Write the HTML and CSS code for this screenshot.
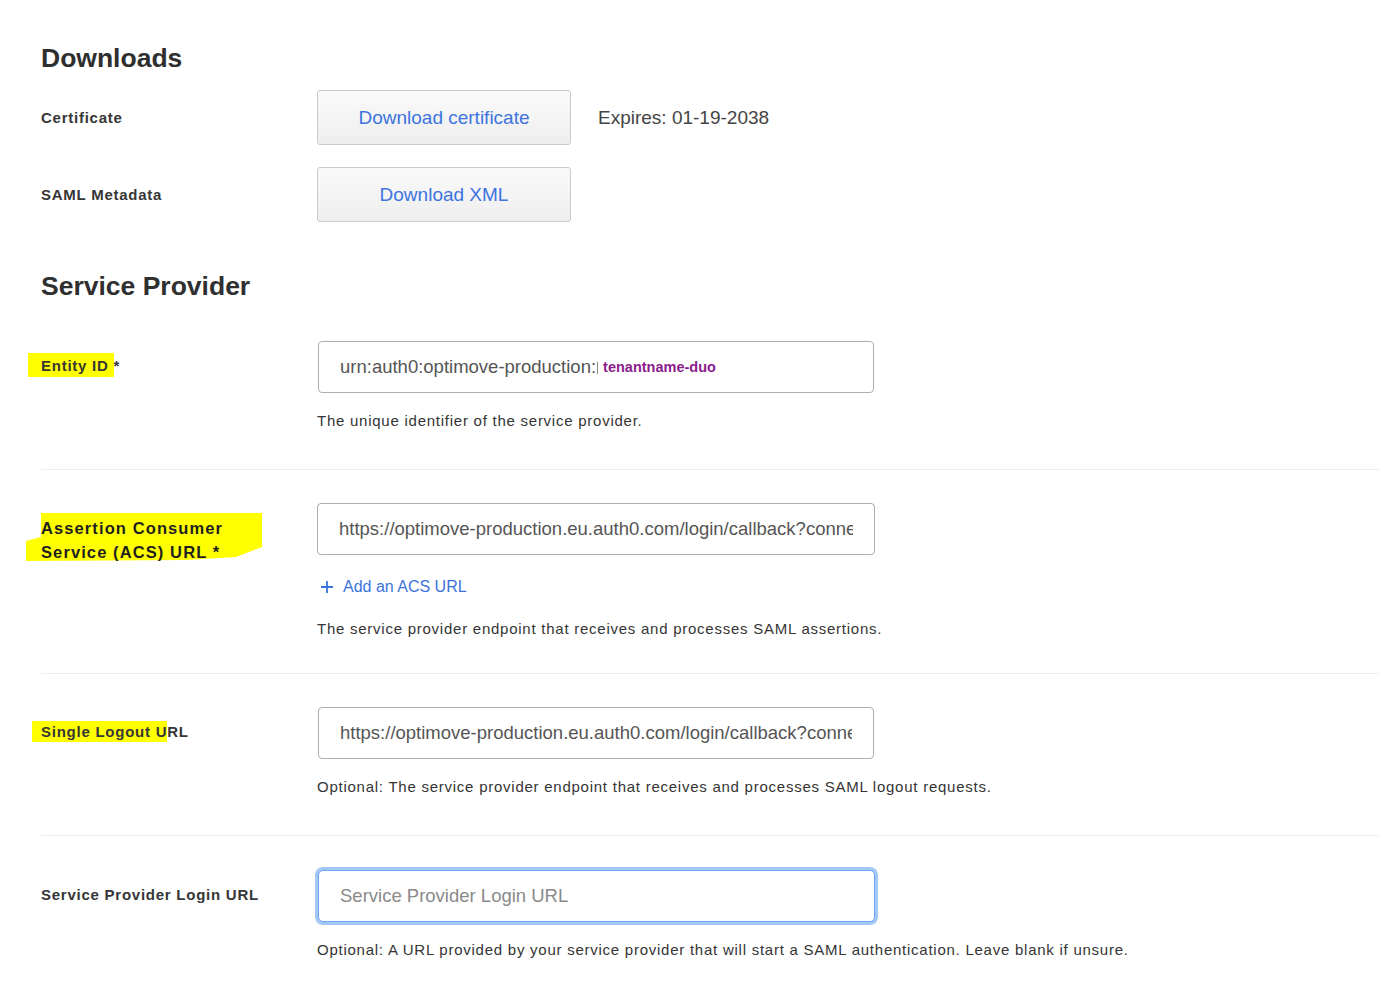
FILE: index.html
```html
<!DOCTYPE html>
<html>
<head>
<meta charset="utf-8">
<title>SAML Settings</title>
<link rel="stylesheet" href="styles.css">
</head>
<body>
<div class="page">
  <h2 class="section-title">Downloads</h2>
  <div class="dl-rows">
    <div class="dl-row">
      <div class="label">Certificate</div>
      <div class="dl-control">
        <button class="btn">Download certificate</button>
        <span class="expires">Expires: 01-19-2038</span>
      </div>
    </div>
    <div class="dl-row">
      <div class="label">SAML Metadata</div>
      <div class="dl-control">
        <button class="btn">Download XML</button>
      </div>
    </div>
  </div>

  <h2 class="section-title sp-title">Service Provider</h2>

  <div class="field field-first">
    <div class="label"><span class="hl hl-entity">Entity ID </span>*</div>
    <div class="control">
      <div class="input-box"><span class="urn">urn:auth0:optimove-production:</span><span class="cut"></span><span class="tenant">tenantname-duo</span></div>
      <p class="help">The unique identifier of the service provider.</p>
    </div>
  </div>

  <div class="field field-acs">
    <div class="label"><span class="hl-block">Assertion Consumer Service (ACS) URL *</span></div>
    <div class="control">
      <input class="text-input" type="text" value="https://optimove-production.eu.auth0.com/login/callback?connection=tenantname-duo">
      <a class="add-link" href="#"><svg class="plus" width="14" height="14" viewBox="0 0 14 14"><path d="M7 1v12M1 7h12" stroke="#3b73dc" stroke-width="1.8" fill="none"/></svg><span>Add an ACS URL</span></a>
      <p class="help help-acs">The service provider endpoint that receives and processes SAML assertions.</p>
    </div>
  </div>

  <div class="field">
    <div class="label"><span class="hl hl-logout">Single Logout U</span>RL</div>
    <div class="control">
      <input class="text-input" type="text" value="https://optimove-production.eu.auth0.com/login/callback?connection=tenantname-duo">
      <p class="help">Optional: The service provider endpoint that receives and processes SAML logout requests.</p>
    </div>
  </div>

  <div class="field field-last">
    <div class="label">Service Provider Login URL</div>
    <div class="control">
      <input class="text-input focused" type="text" placeholder="Service Provider Login URL">
      <p class="help">Optional: A URL provided by your service provider that will start a SAML authentication. Leave blank if unsure.</p>
    </div>
  </div>
</div>
</body>
</html>
```

FILE: styles.css
```css
* { box-sizing: border-box; }

html, body {
  margin: 0;
  padding: 0;
  background: #ffffff;
}

body {
  font-family: "Liberation Sans", Arial, sans-serif;
  color: #333333;
}

.page {
  padding: 42px 0 16px 41px;
}

.section-title {
  margin: 0 0 16px 0;
  font-size: 26.5px;
  line-height: 32px;
  font-weight: bold;
  color: #2f2f2f;
}

.sp-title {
  margin-top: 48px;
  margin-bottom: 39px;
}

.dl-rows {
  display: flex;
  flex-direction: column;
  gap: 22px;
}

.dl-row {
  display: grid;
  grid-template-columns: 276px 1fr;
  align-items: center;
  height: 55px;
}

.label {
  font-size: 15px;
  font-weight: bold;
  letter-spacing: 0.75px;
  color: #363636;
  line-height: 24px;
  padding-right: 49px;
}

.dl-control {
  display: flex;
  align-items: center;
}

.btn {
  width: 254px;
  height: 55px;
  border: 1px solid #cacaca;
  border-radius: 3px;
  background: linear-gradient(#fafafa, #eeeeee);
  font-family: "Liberation Sans", Arial, sans-serif;
  font-size: 19px;
  color: #3d74df;
  padding: 0;
  cursor: pointer;
}

.expires {
  margin-left: 27px;
  font-size: 19px;
  color: #444444;
}

.field {
  display: grid;
  grid-template-columns: 277px 1fr;
  padding: 33px 0 38px 0;
  border-bottom: 1px solid #eeeeee;
}

.field-first {
  padding-top: 0;
}

.field-acs {
  padding-bottom: 34px;
}

.field-last {
  border-bottom: none;
  padding-top: 34px;
}

.field .label {
  padding-top: 13px;
}

.control {
  display: flex;
  flex-direction: column;
  align-items: flex-start;
}

.input-box,
.text-input {
  width: 556px;
  height: 52px;
  border: 1px solid #adadad;
  border-radius: 4px;
  background: #ffffff;
  padding: 0 21px;
  font-family: "Liberation Sans", Arial, sans-serif;
  font-size: 18.5px;
  color: #555555;
  outline: none;
}

.field-acs .text-input {
  margin-left: -1px;
  width: 558px;
}

.input-box {
  display: flex;
  align-items: center;
  white-space: nowrap;
  overflow: hidden;
}

.urn {
  color: #555555;
}

.cut {
  display: inline-block;
  width: 2px;
  height: 12px;
  border-left: 1px solid #888888;
  margin: 2px 4px 0 1px;
}

.tenant {
  font-size: 14.5px;
  font-weight: bold;
  color: #8b1c8c;
}

.text-input::placeholder {
  color: #8a8a8a;
}

.text-input.focused {
  border: 1px solid #6fa6ee;
  box-shadow: 0 0 0 3px #a3c8f6;
  border-radius: 5px;
  width: 557px;
}

.help {
  margin: 18px 0 0 0;
  font-size: 15px;
  line-height: 20px;
  letter-spacing: 0.75px;
  color: #353535;
  margin-left: -1px;
}

.help-acs {
  margin-top: 22px;
}

.add-link {
  display: flex;
  align-items: center;
  gap: 9px;
  margin-top: 22px;
  margin-left: 2px;
  font-size: 16px;
  line-height: 20px;
  color: #3b73dc;
  text-decoration: none;
}

.plus {
  display: block;
}

.hl {
  background: #ffff00;
  padding: 4px 0 3px 13px;
  margin-left: -13px;
}

.hl-logout {
  padding: 2px 0 2px 9px;
  margin-left: -9px;
}

.hl-block {
  position: relative;
  display: inline-block;
  max-width: 215px;
  font-size: 16.5px;
  letter-spacing: 1.1px;
  color: #1f1f1f;
  z-index: 0;
}

.hl-block::before {
  content: "";
  position: absolute;
  left: -15px;
  top: -3px;
  width: 236px;
  height: 50px;
  background: #ffff00;
  z-index: -1;
  clip-path: polygon(15px 0, 236px 0, 236px 34px, 210px 44px, 160px 47px, 0 48px, 0 28px, 15px 24px);
}
```
